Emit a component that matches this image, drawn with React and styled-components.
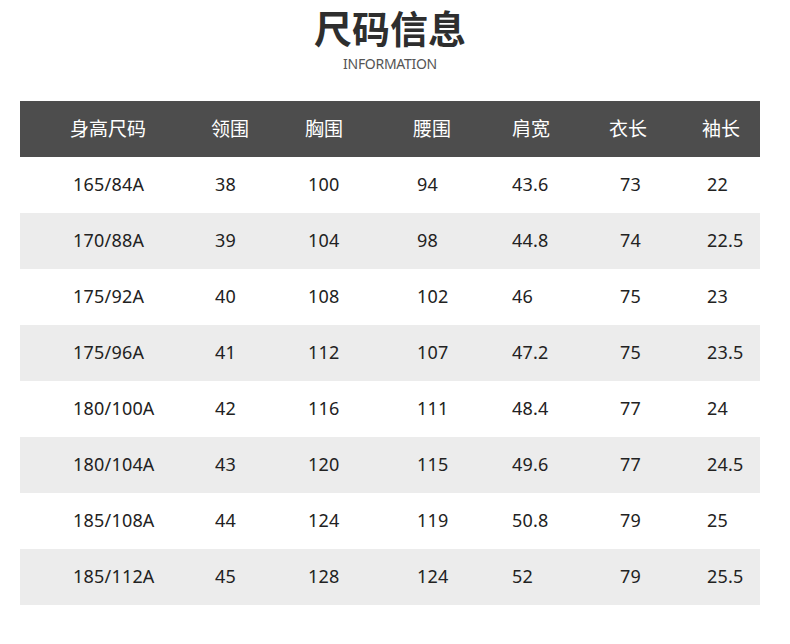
import React from "react";
import styled, { createGlobalStyle } from "styled-components";

const GlobalStyle = createGlobalStyle`
  html, body {
    margin: 0;
    padding: 0;
    background: #fff;
  }
  body {
    font-family: "Noto Sans", "Noto Sans CJK SC", sans-serif;
    color: #222;
  }
`;

// width of each column, plus how far the values sit in from the header text
const columns = [
  { key: "size", title: "身高尺码", width: 141, shift: 3 },
  { key: "neck", title: "领围", width: 94, shift: 4 },
  { key: "chest", title: "胸围", width: 108, shift: 3 },
  { key: "waist", title: "腰围", width: 99, shift: 4 },
  { key: "shoulder", title: "肩宽", width: 97, shift: -2 },
  { key: "length", title: "衣长", width: 93, shift: 11 },
  { key: "sleeve", title: "袖长", width: 58, shift: 5 },
];

const rows = [
  ["165/84A", "38", "100", "94", "43.6", "73", "22"],
  ["170/88A", "39", "104", "98", "44.8", "74", "22.5"],
  ["175/92A", "40", "108", "102", "46", "75", "23"],
  ["175/96A", "41", "112", "107", "47.2", "75", "23.5"],
  ["180/100A", "42", "116", "111", "48.4", "77", "24"],
  ["180/104A", "43", "120", "115", "49.6", "77", "24.5"],
  ["185/108A", "44", "124", "119", "50.8", "79", "25"],
  ["185/112A", "45", "128", "124", "52", "79", "25.5"],
];

const Page = styled.div`
  width: 790px;
  height: 644px;
  box-sizing: border-box;
  padding: 0 30px 0 20px;
  background: #fff;
`;

const Heading = styled.div`
  display: flex;
  flex-direction: column;
  align-items: center;
  padding-top: 2px;
  height: 98px;
  box-sizing: border-box;
`;

const Title = styled.h1`
  margin: 0;
  font-family: "Noto Sans CJK SC", sans-serif;
  font-size: 38px;
  font-weight: 700;
  line-height: 50px;
  color: #2e2e2e;
`;

const Subtitle = styled.div`
  margin-top: 3px;
  font-family: "Noto Sans", sans-serif;
  font-size: 14px;
  line-height: 18px;
  color: #555;
  letter-spacing: -0.3px;
`;

const Table = styled.div`
  width: 740px;
  margin-top: 3px;
`;

const Row = styled.div`
  display: flex;
  align-items: center;
  height: 56px;
  padding-left: 50px;
  box-sizing: border-box;
  background: ${(p) => (p.$head ? "#4d4d4d" : p.$shaded ? "#ececec" : "#fff")};
  color: ${(p) => (p.$head ? "#fff" : "#222")};
`;

const HeadCell = styled.div`
  flex: 0 0 ${(p) => p.$width}px;
  white-space: nowrap;
  font-family: "Noto Sans CJK SC", sans-serif;
  font-size: 19px;
  line-height: 26px;
  padding-bottom: 3px;
`;

const Cell = styled.div`
  flex: 0 0 ${(p) => p.$width}px;
  box-sizing: border-box;
  padding-left: ${(p) => p.$shift}px;
  white-space: nowrap;
  font-family: "Noto Sans", sans-serif;
  font-size: 18px;
  line-height: 24px;
  letter-spacing: 0.2px;
  padding-bottom: 3px;
`;

export default function App() {
  return (
    <>
      <GlobalStyle />
      <Page>
        <Heading>
          <Title>尺码信息</Title>
          <Subtitle>INFORMATION</Subtitle>
        </Heading>
        <Table>
          <Row $head>
            {columns.map((c) => (
              <HeadCell key={c.key} $width={c.width}>
                {c.title}
              </HeadCell>
            ))}
          </Row>
          {rows.map((r, i) => (
            <Row key={r[0]} $shaded={i % 2 === 1}>
              {r.map((v, j) => (
                <Cell key={columns[j].key} $width={columns[j].width} $shift={columns[j].shift}>
                  {v}
                </Cell>
              ))}
            </Row>
          ))}
        </Table>
      </Page>
    </>
  );
}
